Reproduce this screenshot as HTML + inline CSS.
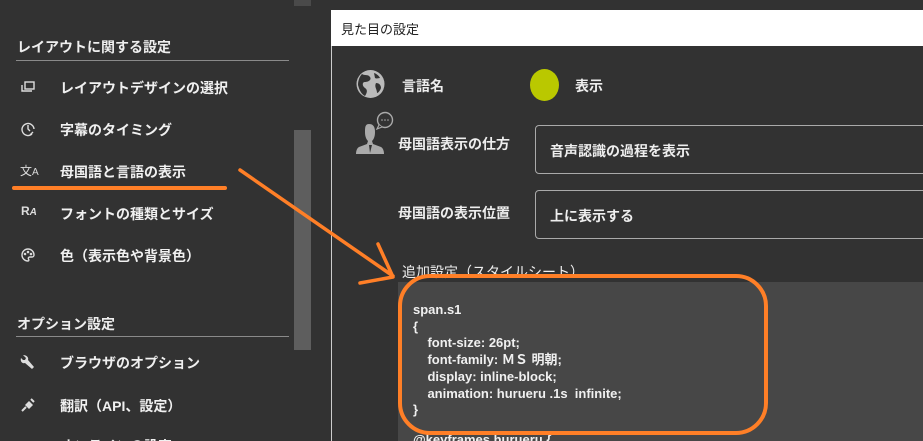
<!DOCTYPE html>
<html style="width:923px;height:441px;overflow:hidden"><head><meta charset="utf-8"><style>
*{margin:0;padding:0;box-sizing:border-box}
body{width:923px;height:441px;background:#323232;overflow:hidden;position:relative;font-family:"Liberation Sans","Noto Sans CJK JP",sans-serif;color:#fff}
.a{position:absolute;white-space:nowrap}
.sec{font-size:14px;color:#eee;font-weight:bold;left:17px}
.line{position:absolute;left:16px;width:273px;height:1px;background:#8a8a8a}
.it{font-size:14px;font-weight:bold;left:60px;color:#f0f0f0}
.ic{position:absolute;left:20px;color:#ddd;font-size:12px}
.lab{font-size:14px;font-weight:bold;color:#eee}
.box{position:absolute;left:535px;width:400px;height:49px;border:1px solid #aaa;border-radius:4px}
.code{font-size:13px;font-weight:bold;color:#f0f0f0;left:413px}
</style></head><body>
<div class="a" style="left:294px;top:0;width:17px;height:6px;background:#4a4a4a"></div>
<div class="a" style="left:294px;top:130px;width:17px;height:220px;background:#5e5e5e"></div>

<div class="a sec" style="top:37px">レイアウトに関する設定</div>
<div class="line" style="top:60px"></div>
<svg class="ic" style="top:80px" width="16" height="14" viewBox="0 0 16 14" fill="none" stroke="#ddd" stroke-width="1.4"><rect x="5" y="2" width="9" height="7"/><path d="M2 5v6h10"/></svg>
<div class="a it" style="top:78px">レイアウトデザインの選択</div>
<svg class="ic" style="top:121px" width="16" height="16" viewBox="0 0 16 16" fill="none" stroke="#ddd" stroke-width="1.4"><path d="M12 13A6 6 0 1 1 14 8"/><path d="M8 4v4l2 2M10 14l3-3"/></svg>
<div class="a it" style="top:120px">字幕のタイミング</div>
<div class="a" style="left:20px;top:162px;font-size:12px;color:#ddd">文<span style="font-size:10px">A</span></div>
<div class="a it" style="top:162px">母国語と言語の表示</div>
<div class="a" style="left:12px;top:186px;width:215px;height:4px;border-radius:2px;background:#ff7f27"></div>
<div class="a" style="left:21px;top:204px;font-size:12px;font-weight:bold;color:#ddd">R<i style="font-size:10px">A</i></div>
<div class="a it" style="top:204px">フォントの種類とサイズ</div>
<svg class="ic" style="top:247px" width="16" height="16" viewBox="0 0 16 16" fill="none" stroke="#ddd" stroke-width="1.4"><path d="M8 2a6 6 0 1 0 0 12c1 0 1-1 .5-2s0-2 1.5-2h2a2 2 0 0 0 2-2A6 6 0 0 0 8 2z"/><circle cx="5" cy="7" r=".6"/><circle cx="8" cy="5" r=".6"/><circle cx="11" cy="7" r=".6"/></svg>
<div class="a it" style="top:246px">色（表示色や背景色）</div>

<div class="a sec" style="top:314px">オプション設定</div>
<div class="line" style="top:336px"></div>
<svg class="ic" style="top:354px" width="16" height="16" viewBox="0 0 16 16"><path d="M3 1l3 3-1 2-2 0-2-2c-1 3 1 6 4 5l7 6 2-2-6-7c1-3-2-5-5-5z" fill="#ddd"/></svg>
<div class="a it" style="top:353px">ブラウザのオプション</div>
<svg class="ic" style="top:397px" width="16" height="16" viewBox="0 0 16 16"><path d="M2 14l4-4M11 2l3 3" stroke="#ddd" stroke-width="2" fill="none"/><path d="M5 8l4-4 4 4-4 4z" fill="#ddd"/></svg>
<div class="a it" style="top:396px">翻訳（API、設定）</div>
<div class="a it" style="top:436px">オンラインの設定</div>

<div class="a" style="left:331px;top:10px;width:592px;height:431px;background:#323232;border-left:1px solid #ccc"></div>
<div class="a" style="left:331px;top:10px;width:592px;height:36px;background:#fff"></div>
<div class="a" style="left:341px;top:19px;font-size:13px;color:#222">見た目の設定</div>

<svg class="a" style="left:356px;top:68px" width="30" height="33" viewBox="0 0 30 33"><circle cx="14.5" cy="16" r="14" fill="#bbb"/><path d="M6 6c3 2 6 0 8 3s-2 5-5 5-3 4 0 6 2 5 0 8c-4-2-6-7-7-11 0-5 2-9 4-11zM18 5c3 1 5 3 6 5-2 0-3 1-5 0zM20 15c3 0 5 2 5 5-1 3-3 5-4 5 0-4-3-6-1-10z" fill="#333"/></svg>
<div class="a lab" style="left:402px;top:76px">言語名</div>
<div class="a" style="left:530px;top:69px;width:29px;height:32px;border-radius:50%;background:#bac800"></div>
<div class="a lab" style="left:575px;top:76px">表示</div>

<svg class="a" style="left:352px;top:110px" width="42" height="45" viewBox="0 0 42 45"><path d="M17 14c5 0 6 4 6 8s-1 7-3 9l1 3 8 3c2 1 3 4 3 7H4c0-3 1-6 3-7l8-3 1-3c-2-2-3-5-3-9s0-8 4-8z" fill="#aaa"/><path d="M17 35l1 8 2-8z" fill="#333"/><circle cx="33" cy="10" r="7.5" fill="#333" stroke="#aaa" stroke-width="1.4"/><path d="M27 15l-2 4 5-2" fill="#333" stroke="#aaa" stroke-width="1.2"/><circle cx="30" cy="10" r=".8" fill="#aaa"/><circle cx="33" cy="10" r=".8" fill="#aaa"/><circle cx="36" cy="10" r=".8" fill="#aaa"/></svg>
<div class="a lab" style="left:398px;top:134px">母国語表示の仕方</div>
<div class="box" style="top:125px"></div>
<div class="a lab" style="left:550px;top:141px">音声認識の過程を表示</div>
<div class="a lab" style="left:398px;top:203px">母国語の表示位置</div>
<div class="box" style="top:190px"></div>
<div class="a lab" style="left:550px;top:206px">上に表示する</div>

<div class="a" style="left:402px;top:262px;font-size:14px;color:#eee">追加設定（スタイルシート）</div>
<div class="a" style="left:398px;top:282px;width:525px;height:159px;background:#474747"></div>
<div class="a code" style="top:302px;line-height:16.7px">span.s1<br>{<br>&nbsp;&nbsp;&nbsp;&nbsp;font-size: 26pt;<br>&nbsp;&nbsp;&nbsp;&nbsp;font-family: ＭＳ 明朝;<br>&nbsp;&nbsp;&nbsp;&nbsp;display: inline-block;<br>&nbsp;&nbsp;&nbsp;&nbsp;animation: hurueru .1s&nbsp; infinite;<br>}</div>
<div class="a code" style="top:432px">@keyframes hurueru {</div>

<svg class="a" style="left:0;top:0" width="923" height="441">
<rect x="400" y="276" width="366" height="157" rx="30" ry="30" fill="none" stroke="#ff7f27" stroke-width="4"/>
<path d="M240 170L393 276M378 244l15 33M360 283l33-6" stroke="#ff7f27" stroke-width="3.5" fill="none" stroke-linecap="round"/>
</svg>
</body></html>
